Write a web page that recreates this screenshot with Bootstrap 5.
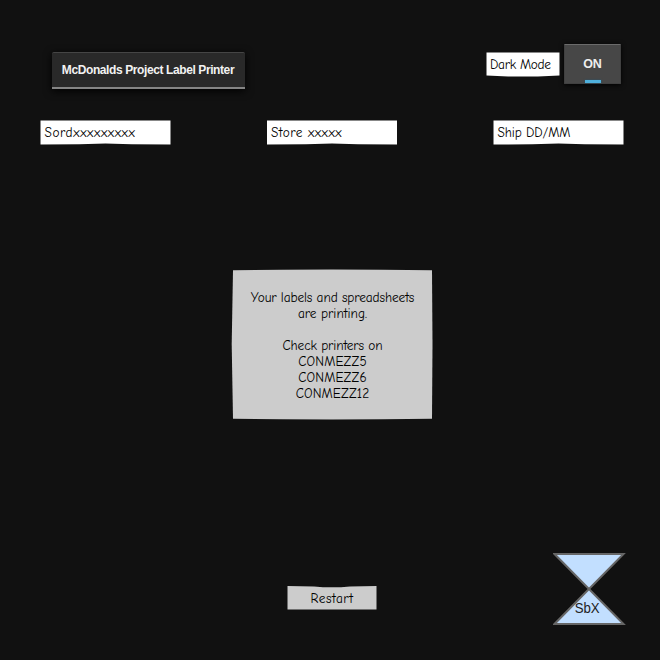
<!DOCTYPE html>
<html lang="en">
<head>
<meta charset="utf-8">
<meta name="viewport" content="width=device-width, initial-scale=1">
<title>McDonalds Project Label Printer</title>
<link rel="stylesheet" href="https://cdn.jsdelivr.net/npm/bootstrap@5.3.0/dist/css/bootstrap.min.css">
<style>
body{background:#111;color:#000;width:660px;height:660px;overflow:hidden;font:13.33px/16px "Comic Sans MS","Comic Neue","Open Sans",sans-serif}
.topbar{padding:43px 39px 0 52px}
.app-title{width:193px;height:37px;margin-top:9px;padding-right:1px;background:#292929;border-top:1px solid #454545;border-bottom:2px solid #858585;border-radius:2px 2px 0 0;color:#f2f2f2;font:bold 12px/34px "Liberation Sans",Arial,sans-serif;letter-spacing:-.4px;box-shadow:0 2px 9px #000;white-space:nowrap}
.mode{gap:4px}
.mode-label{width:74px;height:25px;margin-top:2px;padding:1px 4px 0;background:#fff;clip-path:polygon(.5px .5px,73.5px .5px,73.5px 23.5px,70% 24.5px,30% 24.5px,.5px 23.5px)}
.toggle{width:57px;height:40px;margin-top:1px;background:#474747;border:1px solid #404040;border-top-color:#6b6b6b;border-radius:1px;color:#eee;font:bold 12.5px/38px "Liberation Sans",Arial,sans-serif;box-shadow:0 1px 5px #000}
.toggle-bar{width:16px;height:3px;bottom:0;left:20px;background:#4fb0dc;box-shadow:0 0 2px #245a75}
.fields{padding:31px 36px 0 40px}
.entry{width:131px;height:25px;padding:1px 4.5px 0;background:#fff;border:0;clip-path:polygon(.5px .5px,130.5px .5px,130.5px 24.5px,70% 24.3px,50% 23.6px,30% 24.3px,.5px 24.5px)}
.notice{width:202px;height:151px;margin:124px 0 0 231px;padding:21px 0 0 1px;background:#ccc;clip-path:polygon(2px 1.3px,25% .8px,50% .4px,75% .8px,201px 1.3px,201.5px 50%,201px 149.8px,75% 150.2px,50% 150.5px,25% 150.2px,2px 149.8px,.7px 50%)}
.restart{width:90px;height:24px;margin:166px 0 0 287px;background:#ccc;border:0;color:#000;clip-path:polygon(.5px 0,30% .5px,40% 1.2px,60% 1.2px,70% .5px,89.5px 0,89.5px 23.5px,.5px 23.5px)}
.restart span{padding-top:2px}
.glass{left:553px;top:552px;width:73px;height:74px}
.glass text{font:14px "Liberation Sans",Arial,sans-serif}
.t span{display:inline-block;white-space:pre}
.ls-tight{letter-spacing:-.3px}
.ls-snug{letter-spacing:-.11px}
.ls-open{letter-spacing:.13px}
.ls-wide{letter-spacing:.5px}
.ls-wider{letter-spacing:.6px}
</style>
</head>
<body class="position-relative">
<header class="topbar d-flex justify-content-between align-items-start">
  <h1 class="app-title text-center mb-0">McDonalds Project Label Printer</h1>
  <div class="mode d-flex align-items-center">
    <div class="mode-label d-flex align-items-center t"><span class="ls-tight">Dark Mode</span></div>
    <button class="toggle position-relative p-0 text-center" type="button">ON<i class="toggle-bar position-absolute"></i></button>
  </div>
</header>
<main>
  <div class="fields d-flex justify-content-between">
    <div class="entry d-flex align-items-center t"><span class="ls-wider">Sordxxxxxxxxx</span></div>
    <div class="entry d-flex align-items-center t"><span class="ls-wide">Store xxxxx</span></div>
    <div class="entry d-flex align-items-center t"><span class="ls-snug">Ship DD/MM</span></div>
  </div>
  <section class="notice text-center t">
    <span class="ls-snug">Your labels and spreadsheets</span><br><span>are printing.</span><br><br><span class="ls-snug">Check printers on</span><br><span class="ls-open">CONMEZZ5</span><br><span class="ls-open">CONMEZZ6</span><br><span class="ls-open">CONMEZZ12</span>
  </section>
  <button class="restart d-block p-0 t" type="button"><span class="ls-wide">Restart</span></button>
</main>
<svg class="glass position-absolute" viewBox="553 552 73 74" aria-label="SbX">
  <path d="M554.5 554H623.5L554.5 624H623.5Z" fill="#c2dfff" stroke="#666" stroke-width="2"/>
  <text x="574.7" y="613" fill="#222" textLength="25" lengthAdjust="spacingAndGlyphs">SbX</text>
</svg>
<script src="https://cdn.jsdelivr.net/npm/bootstrap@5.3.0/dist/js/bootstrap.bundle.min.js"></script>
</body>
</html>
